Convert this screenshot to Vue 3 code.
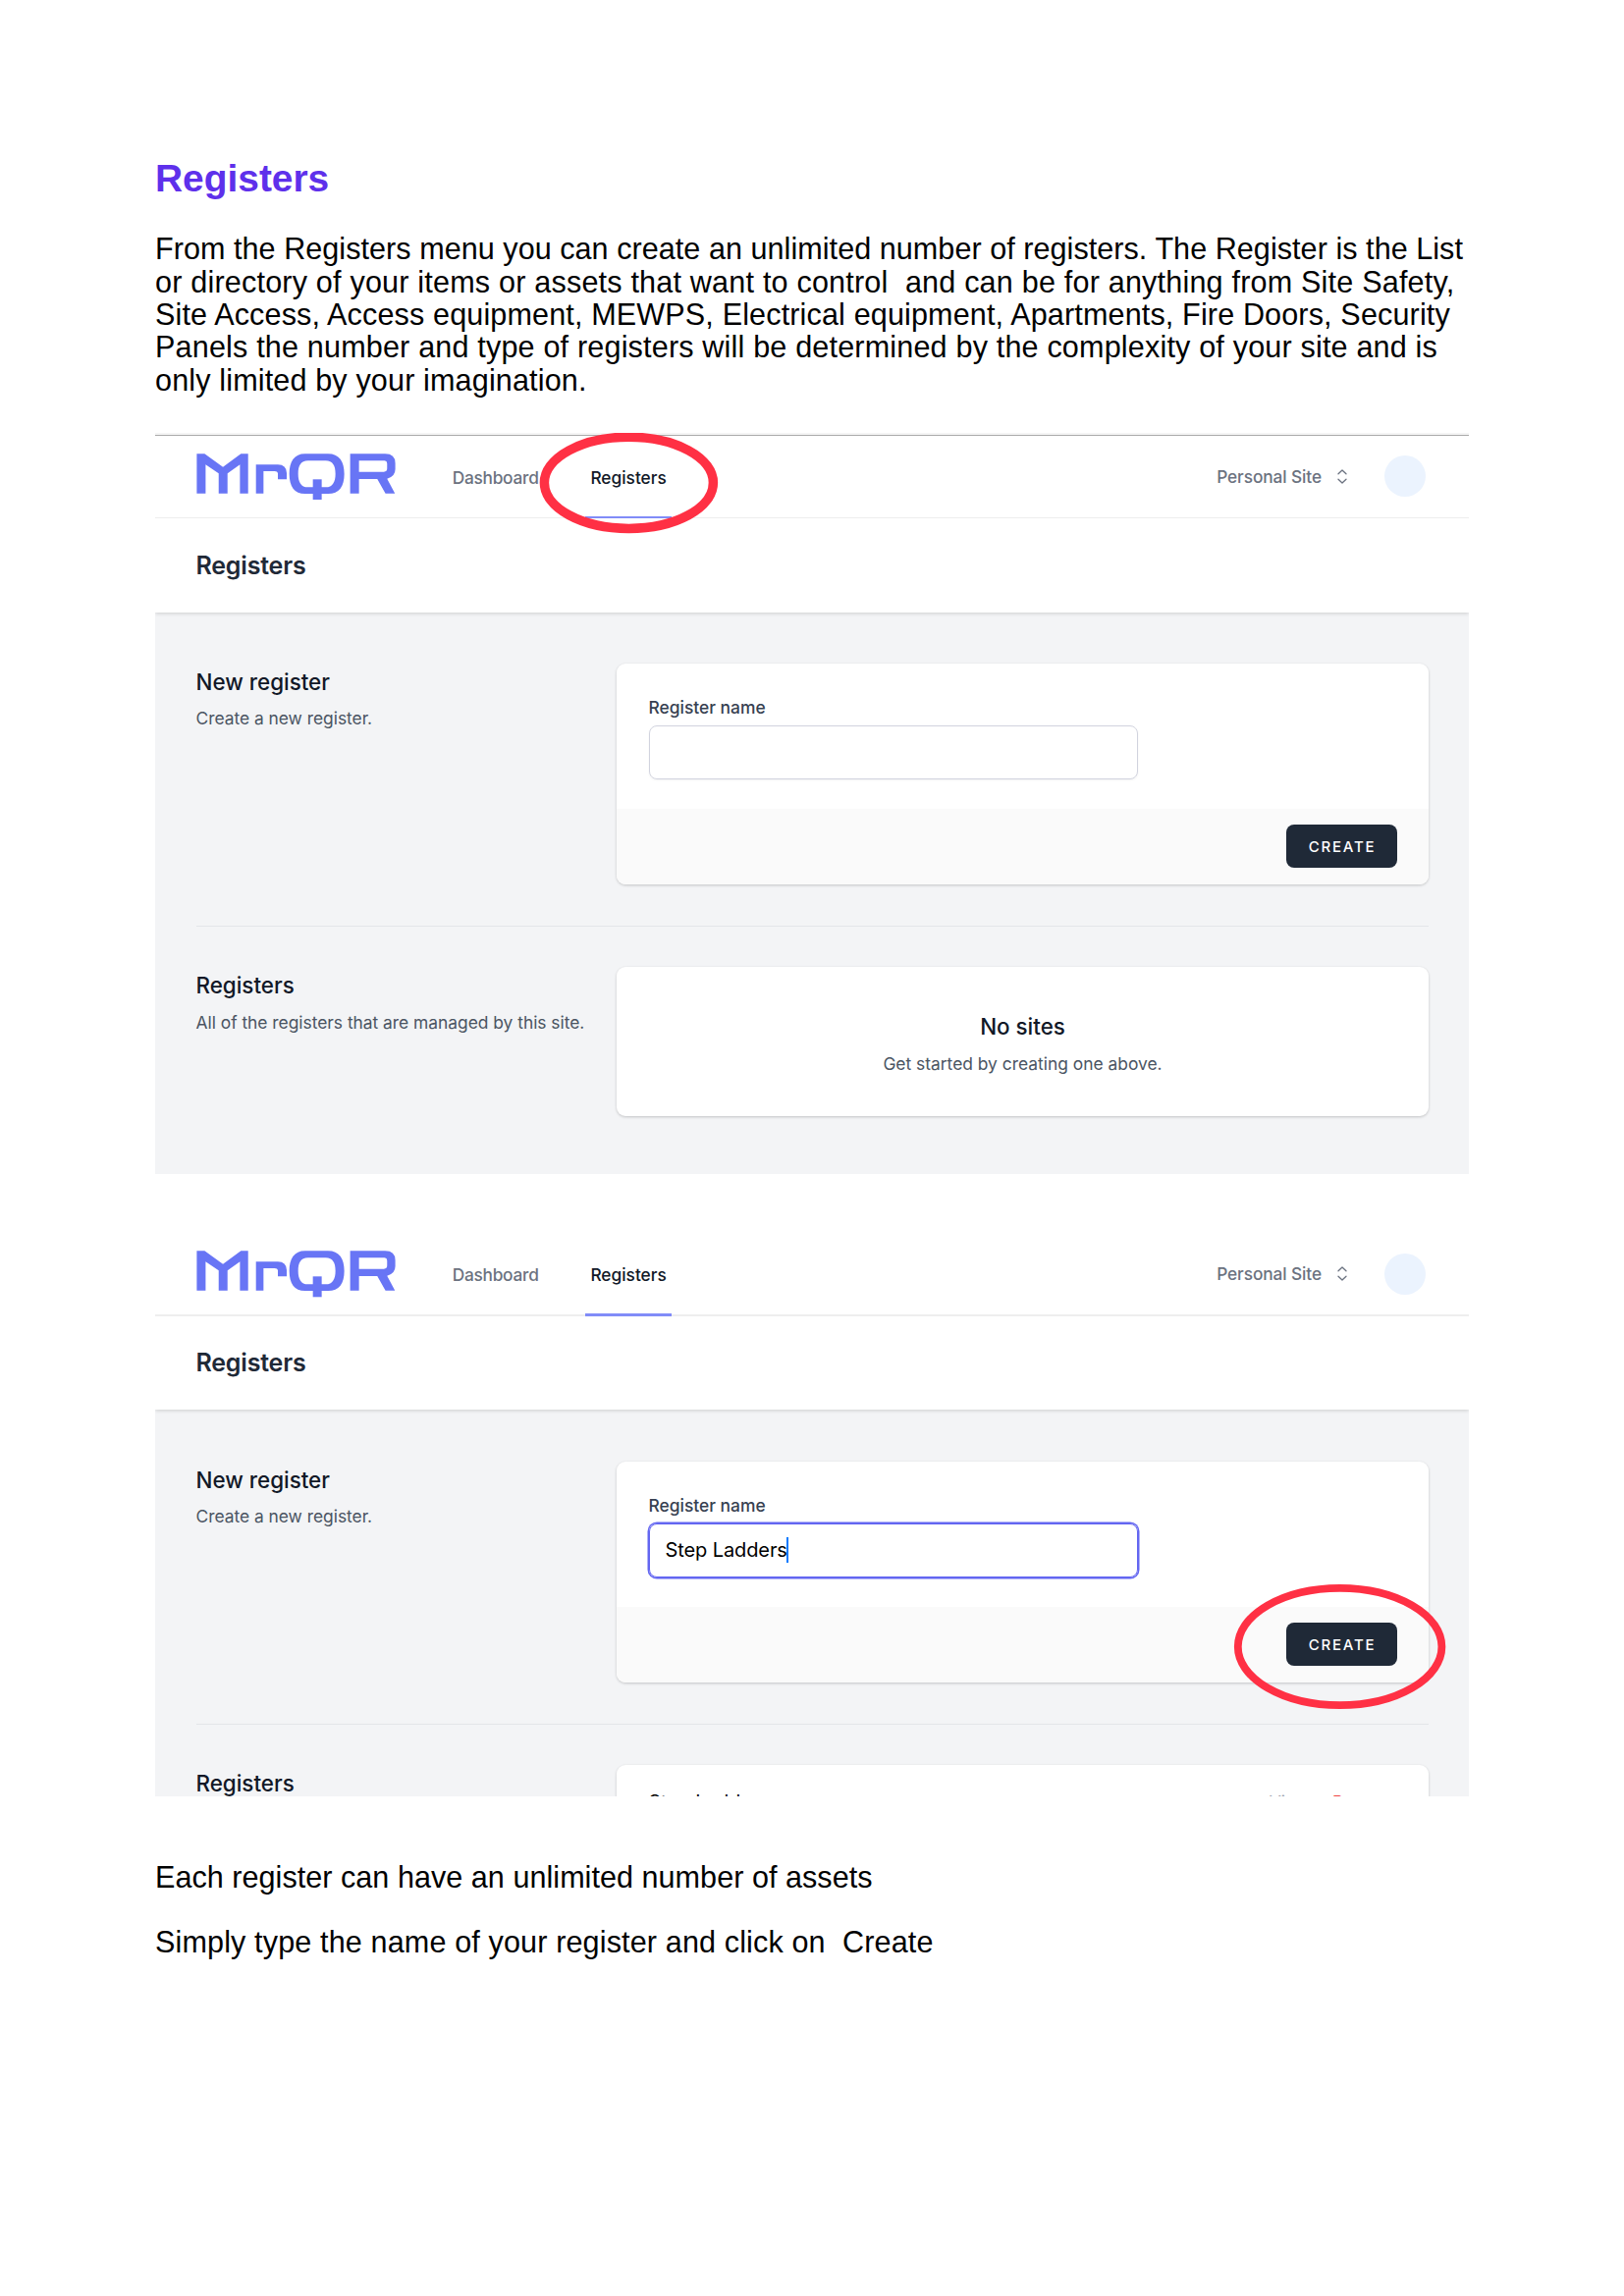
<script setup>
const intro = [
  { text: 'From the Registers menu you can create an unlimited number of registers. The Register is the List', track: 0.05 },
  { text: 'or directory of your items or assets that want to control  and can be for anything from Site Safety,', track: 0.2 },
  { text: 'Site Access, Access equipment, MEWPS, Electrical equipment, Apartments, Fire Doors, Security', track: 0.145 },
  { text: 'Panels the number and type of registers will be determined by the complexity of your site and is', track: 0.18 },
  { text: 'only limited by your imagination.', track: 0.15 },
]
const note = 'Each register can have an unlimited number of assets'
const closing = 'Simply type the name of your register and click on  Create'

const screens = [
  { id: 'empty', name: '', registers: [], ring: { cx: 482.4, cy: 50.8, rx: 86, ry: 46.6, stroke: 9.5 } },
  { id: 'filled', name: 'Step Ladders', registers: ['Step Ladders'], ring: { cx: 1206.6, cy: 424.5, rx: 103.8, ry: 59.7, stroke: 7.8 } },
]
</script>

<template>
  <main class="page">
    <h1 class="title">Registers</h1>
    <p class="copy intro">
      <span v-for="line in intro" :key="line.text" :style="{ letterSpacing: line.track + 'px' }">{{ line.text }}</span>
    </p>

    <section v-for="s in screens" :key="s.id" class="shot" :class="s.id">
      <header class="topbar">
        <svg class="logo" viewBox="13 20 609 142" fill="#6875f5" fill-rule="evenodd" aria-label="MrQR">
          <path d="M14 21H38L94 61L149 21H171V142H146V54L108 81V142H81V81L41 54V142H14Z" />
          <path d="M195 142V54H262Q288 54 289 80V99H262V80Q261 74 252 74H218V142Z" />
          <path d="M345 21H415C450 21 465 45 465 82C465 120 450 143 415 143H345C312 143 297 120 297 82C297 45 312 21 345 21ZM354 42C332 42 324 58 324 82C324 106 332 123 354 123H408C430 123 438 106 438 82C438 58 430 42 408 42Z" />
          <path d="M369 99H396V162H369Z" />
          <path d="M483 142V21H590Q621 21 621 50V68Q621 90 596 97L620 142H591L566 98H510V142ZM510 42V76H586Q596 76 596 66V50Q596 43 588 42Z" />
        </svg>
        <nav class="nav">
          <a class="link dash">Dashboard</a>
          <a class="link active">Registers</a>
        </nav>
        <div class="account">
          <span>Personal Site</span>
          <svg class="chevrons" viewBox="0 0 10 15" fill="none" stroke="#6b7280" stroke-width="1.3" stroke-linecap="round" stroke-linejoin="round">
            <path d="M1 4.8L5 1L9 4.8M1 10.2L5 14L9 10.2" />
          </svg>
          <i class="avatar"></i>
        </div>
      </header>

      <div class="heading"><h2>Registers</h2></div>

      <div class="content">
        <div class="row">
          <div class="about">
            <h3>New register</h3>
            <p>Create a new register.</p>
          </div>
          <div class="card form">
            <div class="fields">
              <label>Register name</label>
              <div class="input"><template v-if="s.name">{{ s.name }}<i class="caret"></i></template></div>
            </div>
            <div class="actions"><button>CREATE</button></div>
          </div>
        </div>

        <hr />

        <div class="row">
          <div class="about">
            <h3>Registers</h3>
            <p>All of the registers that are managed by this site.</p>
          </div>
          <div v-if="!s.registers.length" class="card none">
            <h3>No sites</h3>
            <p>Get started by creating one above.</p>
          </div>
          <div v-else class="card list">
            <div v-for="r in s.registers" :key="r" class="entry">
              <span class="entry-name">{{ r }}</span>
              <span class="view">View</span>
              <span class="remove">Remove</span>
            </div>
          </div>
        </div>
      </div>

      <svg class="ring">
        <ellipse :cx="s.ring.cx" :cy="s.ring.cy" :rx="s.ring.rx" :ry="s.ring.ry" :stroke-width="s.ring.stroke" fill="none" stroke="#ff3044" />
      </svg>
    </section>

    <p class="copy note">{{ note }}</p>
    <p class="copy closing">{{ closing }}</p>
  </main>
</template>

<style>
body {
  margin: 0;
  background: #fff;
}
</style>

<style scoped>
.page {
  box-sizing: border-box;
  width: 1654px;
  height: 2339px;
  padding: 160px 158px 0;
  background: #fff;
  font-family: Inter, sans-serif;
}
h1, h2, h3, p {
  margin: 0;
}
.title {
  font: 700 38.9px/44px "Liberation Sans", Arial, sans-serif;
  color: #5e30eb;
}
.copy {
  font: 400 30.56px/33.3px "Liberation Sans", Arial, sans-serif;
  color: #000;
  white-space: pre;
}
.intro {
  display: flex;
  flex-direction: column;
  margin-top: 33.4px;
}

.shot {
  position: relative;
  width: 1338px;
  height: 755px;
  margin-top: 37px;
  overflow: hidden;
  background: #f3f4f6;
}
.filled {
  height: 577px;
  margin-top: 57px;
}

.topbar {
  box-sizing: border-box;
  position: relative;
  z-index: 1;
  display: flex;
  align-items: center;
  height: 87px;
  padding: 3px 44px 0 42px;
  border-bottom: 1px solid #eee;
  background: #fff;
}
.empty .topbar {
  background: linear-gradient(#f5f5f5 2px, #aaa 2px, #aaa 3px, #fff 3px);
}
.filled .topbar {
  height: 88px;
  padding-top: 4px;
  border-bottom-width: 2px;
}
.logo {
  width: 203px;
  height: 47.3px;
}
.nav {
  display: flex;
  align-self: stretch;
  gap: 47.5px;
  margin-left: 57.7px;
}
.link {
  position: relative;
  display: flex;
  align-items: center;
  padding-top: 2px;
  font-size: 17.3px;
  font-weight: 450;
  color: #6b7280;
}
.dash {
  letter-spacing: -0.25px;
}
.active {
  justify-content: center;
  width: 88px;
  font-weight: 500;
  color: #111827;
}
.active::after {
  content: "";
  position: absolute;
  right: 0;
  bottom: -1px;
  left: 0;
  height: 2px;
  background: #818cf8;
}
.filled .active::after {
  bottom: -2px;
  height: 3px;
}
.account {
  display: flex;
  align-items: center;
  margin-left: auto;
  font-size: 17.3px;
  font-weight: 450;
  letter-spacing: -0.1px;
  color: #6b7280;
}
.chevrons {
  width: 10px;
  height: 15px;
  margin: 0 38px 0 16px;
}
.avatar {
  width: 42px;
  height: 42px;
  border-radius: 50%;
  background: #ebf3fe;
}

.heading {
  position: relative;
  display: flex;
  align-items: center;
  height: 96px;
  padding-left: 41.5px;
  background: #fff;
  box-shadow: 0 1px 4px rgba(0, 0, 0, 0.16);
}
.filled .heading {
  height: 95px;
}
.heading h2 {
  font-size: 25px;
  font-weight: 600;
  letter-spacing: -0.2px;
  color: #1f2937;
}

.content {
  padding: 51.7px 41px 0 41.5px;
}
.filled .content {
  padding-top: 52.7px;
}
.row {
  display: flex;
}
.about {
  flex: none;
  width: 428.5px;
  padding-top: 3px;
  white-space: nowrap;
}
h3 {
  font-size: 22.4px;
  font-weight: 470;
  line-height: 31px;
  color: #111827;
}
.about p, .none p {
  margin-top: 9.4px;
  font-size: 17.4px;
  line-height: 26px;
  color: #4b5563;
}
.about p {
  letter-spacing: -0.02px;
}
.card {
  flex: 1;
  overflow: hidden;
  border-radius: 9px;
  background: #fff;
  box-shadow: 0 1px 3px rgba(0, 0, 0, 0.2);
}
.fields {
  box-sizing: border-box;
  height: 148px;
  padding: 33px 32.5px 0;
}
.fields label {
  display: block;
  font-size: 17.4px;
  font-weight: 450;
  line-height: 24px;
  color: #374151;
}
.input {
  box-sizing: border-box;
  display: flex;
  align-items: center;
  width: 498px;
  height: 55px;
  margin-top: 6px;
  padding-left: 16px;
  border: 1.3px solid #d1d3de;
  border-radius: 8px;
  box-shadow: 0 1px 2px rgba(0, 0, 0, 0.05);
  font-size: 20px;
  letter-spacing: -0.1px;
  color: #000;
}
.filled .input {
  border-color: #6366f1;
  box-shadow: 0 0 0 1.5px #6366f1;
}
.caret {
  width: 2px;
  height: 26px;
  margin-left: -1px;
  background: #0a7aff;
}
.actions {
  display: flex;
  align-items: center;
  justify-content: flex-end;
  height: 77px;
  padding-right: 32px;
  background: #fafafa;
}
button {
  width: 113px;
  height: 44px;
  padding: 0 0 0 1px;
  border: 0;
  border-radius: 8px;
  background: #1f2937;
  font: 550 15px Inter, sans-serif;
  letter-spacing: 1.8px;
  color: #fff;
}
hr {
  height: 1px;
  margin: 42px 0 41.8px;
  border: 0;
  background: #e3e5e9;
}
.none {
  box-sizing: border-box;
  height: 152px;
  padding-top: 45px;
  text-align: center;
}
.list {
  height: 152px;
}
.entry {
  display: flex;
  align-items: center;
  height: 30px;
  padding: 22.5px 32px 0 32.5px;
  font-size: 17.4px;
}
.entry-name {
  flex: 1;
  font-size: 19.6px;
  color: #000;
}
.view {
  margin-right: 24px;
  color: #9ca3af;
}
.remove {
  color: #ef4444;
}
.ring {
  position: absolute;
  z-index: 2;
  inset: 0;
  width: 100%;
  height: 100%;
}
.note {
  margin-top: 66px;
  letter-spacing: 0.04px;
}
.closing {
  margin-top: 32.7px;
  letter-spacing: 0.14px;
}
</style>
